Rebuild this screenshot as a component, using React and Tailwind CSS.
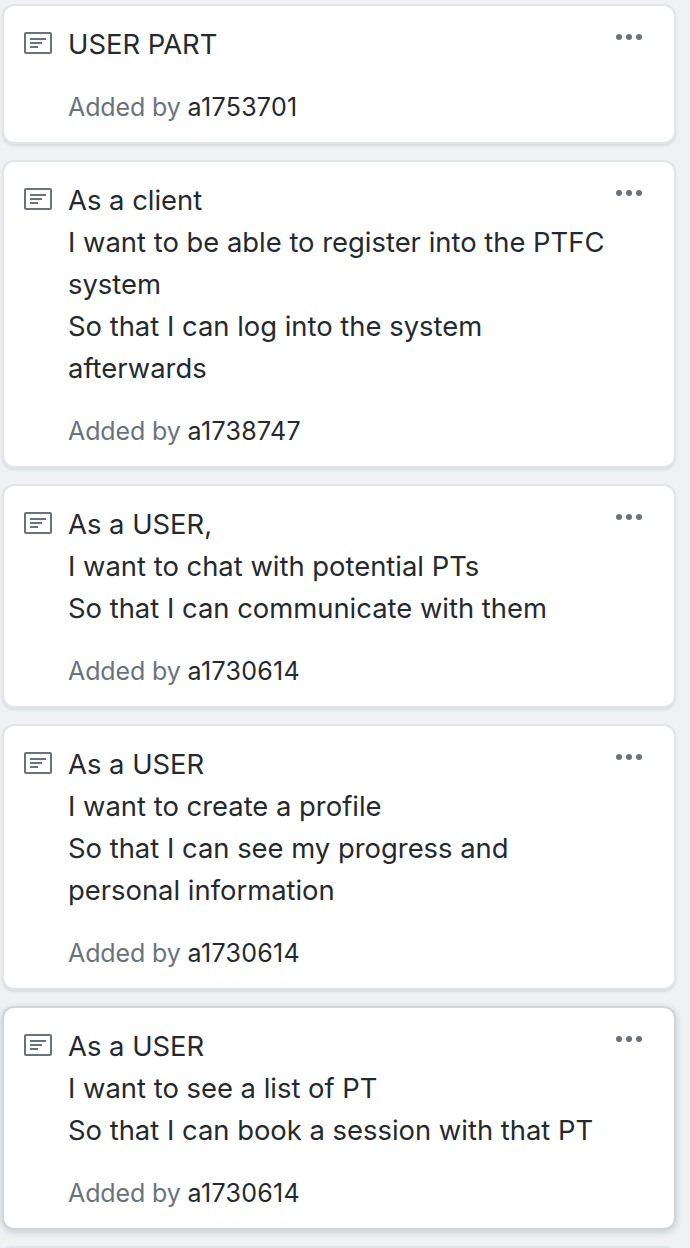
const cards = [
  { lines: ["USER PART"], by: "a1753701" },
  { lines: ["As a client", "I want to be able to register into the PTFC", "system", "So that I can log into the system", "afterwards"], by: "a1738747" },
  { lines: ["As a USER,", "I want to chat with potential PTs", "So that I can communicate with them"], by: "a1730614" },
  { lines: ["As a USER", "I want to create a profile", "So that I can see my progress and", "personal information"], by: "a1730614" },
  { lines: ["As a USER", "I want to see a list of PT", "So that I can book a session with that PT"], by: "a1730614", active: true },
];

function NoteIcon() {
  return (
    <svg width="28" height="22" viewBox="0 0 28 22" fill="none" stroke="#6a737d" strokeWidth="2" className="mt-[9px] shrink-0">
      <rect x="1" y="1" width="26" height="20" rx="1" />
      <path d="M6 7H22M6 11H18M6 15H14" />
    </svg>
  );
}

function Card({ lines, by, active }) {
  return (
    <article className={`flex w-[674px] shrink-0 rounded-[12px] border-2 bg-white pl-5 pr-[31px] pt-[17px] pb-[14px] ${active ? "border-[#d1d5da] shadow-[0_2px_6px_rgba(149,157,165,0.45)]" : "border-[#e1e4e8] shadow-[0_2px_2px_rgba(149,157,165,0.22)]"}`}>
      <NoteIcon />
      <div className="ml-4 min-w-0 flex-1 whitespace-nowrap">
        {lines.map((line) => (
          <p key={line} className="text-[27.4px] leading-[42px]">{line}</p>
        ))}
        <p className="mt-[21px] text-[25px] leading-[42px] tracking-[-0.12px] text-[#6a737d]">
          Added by <span className="tracking-[0.3px] text-[#24292e]">{by}</span>
        </p>
      </div>
      <svg width="28" height="8" viewBox="0 0 28 8" fill="#6a737d" className="mt-[10px] shrink-0">
        <circle cx="4" cy="4" r="3" /><circle cx="14" cy="4" r="3" /><circle cx="24" cy="4" r="3" />
      </svg>
    </article>
  );
}

export default function App() {
  return (
    <main className="flex h-[1248px] w-[690px] flex-col gap-4 overflow-hidden bg-[#eff1f3] pt-1 pl-0.5 font-['Inter',sans-serif] text-[#24292e]">
      {cards.map((card, i) => <Card key={i} {...card} />)}
      <div className="h-5 w-[674px] shrink-0 rounded-[12px] border-2 border-[#e1e4e8] bg-white" />
    </main>
  );
}
